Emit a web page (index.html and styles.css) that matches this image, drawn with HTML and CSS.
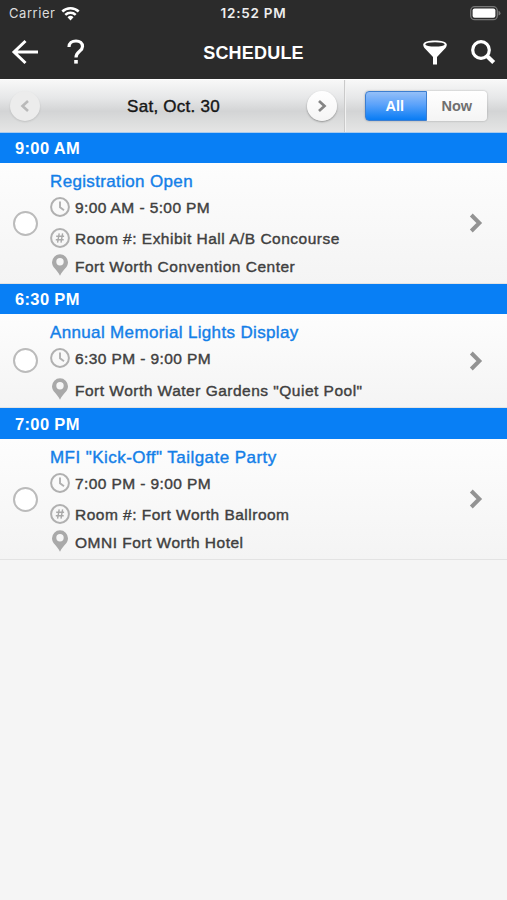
FILE: index.html
```html
<!DOCTYPE html>
<html lang="en">
<head>
<meta charset="utf-8">
<title>Schedule</title>
<link rel="stylesheet" href="styles.css">
</head>
<body>
<svg class="defs" aria-hidden="true">
  <symbol id="clock" viewBox="0 0 20 20"><circle cx="10" cy="10" r="8.9" fill="none" stroke="#b0b0b0" stroke-width="2"/><path d="M10 4.5V10.2L14 13.2" fill="none" stroke="#b0b0b0" stroke-width="1.900"/></symbol>
  <symbol id="hash" viewBox="0 0 20 20"><circle cx="10" cy="10" r="8.9" fill="none" stroke="#b0b0b0" stroke-width="2"/><path d="M9.2 5.3L7.6 14.7M12.6 5.3L11 14.7M6.2 8.3H14.1M5.8 11.8H13.7" fill="none" stroke="#a9a9a9" stroke-width="1.4"/></symbol>
  <symbol id="pin" viewBox="0 0 18 22"><path d="M9 .3A8 8 0 0 0 1 8.300C1 13.500 6 15.500 9 21.800C12 15.500 17 13.500 17 8.300A8 8 0 0 0 9 .3ZM9 4A3.700 3.700 0 1 1 9 11.400A3.700 3.700 0 0 1 9 4Z" fill="#a9a9a9" fill-rule="evenodd"/></symbol>
  <symbol id="chevron" viewBox="0 0 14 20"><path d="M2.300 2L10.300 10L2.300 18" fill="none" stroke="#939393" stroke-width="4"/></symbol>
</svg>
<header class="top">
  <div class="status">
    <div class="carrier"><span>Carrier</span>
      <svg width="19" height="15" viewBox="0 0 19 15"><g fill="none" stroke="#fff" stroke-width="2.500"><path d="M1.300 5.500A11.700 11.700 0 0 1 17.700 5.500"/><path d="M4.300 8.800A7.400 7.400 0 0 1 14.700 8.800"/></g><path d="M9.500 14.500L6.500 11.300A4.300 4.300 0 0 1 12.500 11.300Z" fill="#fff"/></svg>
    </div>
    <span class="clock">12:52 PM</span>
    <svg class="battery" width="31" height="15" viewBox="0 0 31 15"><rect x=".7" y=".7" width="26.600" height="13" rx="4" fill="none" stroke="#777" stroke-width="1.300"/><rect x="2.600" y="2.600" width="22.800" height="9.200" rx="2" fill="#fff"/><path d="M28.500 4.800Q30.500 5.500 30.500 7.200T28.500 9.600Z" fill="#777"/></svg>
  </div>
  <nav class="nav">
    <div class="side">
      <svg width="28" height="26" viewBox="0 0 28 26"><path d="M27 13H3M14.500 2L3 13L14.500 24" fill="none" stroke="#fff" stroke-width="3"/></svg>
      <svg class="help" width="18" height="26" viewBox="0 0 18 26"><path d="M2 8C2 4 5 2 9 2S15.500 4.200 15.500 7.500C15.500 12.500 9 12 9 18.500" fill="none" stroke="#fff" stroke-width="3.200"/><rect x="7.200" y="21" width="3.600" height="3.600" fill="#fff"/></svg>
    </div>
    <h1>SCHEDULE</h1>
    <div class="side right">
      <svg width="24" height="25" viewBox="0 0 24 25"><path d="M.2 4.500C.2-1 23.800-1 23.800 4.500C23.800 6.500 22.800 7.600 21.800 8.800L14 17V24.500H10V17L2.200 8.800C1.200 7.600.2 6.500.2 4.500Z" fill="#fff"/><ellipse cx="12" cy="4.400" rx="9.700" ry="2.200" fill="#2b2b2b"/></svg>
      <svg width="25" height="25" viewBox="0 0 25 25"><circle cx="10" cy="10" r="8.300" fill="none" stroke="#fff" stroke-width="3.200"/><path d="M15.700 15.700L22.700 22.500" stroke="#fff" stroke-width="4.200"/></svg>
    </div>
  </nav>
</header>
<div class="toolbar">
  <div class="dates">
    <button class="round off"><svg width="10" height="14" viewBox="0 0 10 14"><path d="M8 2L2.500 7L8 12" fill="none" stroke="#b9b9b9" stroke-width="2.600"/></svg></button>
    <span class="date">Sat, Oct. 30</span>
    <button class="round"><svg width="10" height="14" viewBox="0 0 10 14"><path d="M2 2L7.500 7L2 12" fill="none" stroke="#858585" stroke-width="2.700"/></svg></button>
  </div>
  <div class="filter">
    <div class="segments"><button class="seg on">All</button><button class="seg">Now</button></div>
  </div>
</div>
<main>
  <h2>9:00 AM</h2>
  <article class="item">
    <span class="check"></span>
    <div class="info">
      <h3>Registration Open</h3>
      <p class="time"><svg class="ic"><use href="#clock"/></svg><span class="hours">9:00 AM - 5:00 PM</span></p>
      <p class="room"><svg class="ic"><use href="#hash"/></svg><span>Room #: Exhibit Hall A/B Concourse</span></p>
      <p class="place"><svg class="pin"><use href="#pin"/></svg><span>Fort Worth Convention Center</span></p>
    </div>
    <svg class="go"><use href="#chevron"/></svg>
  </article>
  <h2>6:30 PM</h2>
  <article class="item compact">
    <span class="check"></span>
    <div class="info">
      <h3>Annual Memorial Lights Display</h3>
      <p class="time"><svg class="ic"><use href="#clock"/></svg><span class="hours">6:30 PM - 9:00 PM</span></p>
      <p class="place"><svg class="pin"><use href="#pin"/></svg><span>Fort Worth Water Gardens "Quiet Pool"</span></p>
    </div>
    <svg class="go"><use href="#chevron"/></svg>
  </article>
  <h2 class="tall">7:00 PM</h2>
  <article class="item">
    <span class="check"></span>
    <div class="info">
      <h3 class="wide">MFI "Kick-Off" Tailgate Party</h3>
      <p class="time"><svg class="ic"><use href="#clock"/></svg><span class="hours">7:00 PM - 9:00 PM</span></p>
      <p class="room"><svg class="ic"><use href="#hash"/></svg><span>Room #: Fort Worth Ballroom</span></p>
      <p class="place"><svg class="pin"><use href="#pin"/></svg><span>OMNI Fort Worth Hotel</span></p>
    </div>
    <svg class="go"><use href="#chevron"/></svg>
  </article>
</main>
</body>
</html>
```
FILE: styles.css
```css
* { box-sizing: border-box; }
body { margin: 0; min-height: 900px; background: #f5f5f5; font-family: "Liberation Sans", Arial, sans-serif; color: #404040; }
svg { display: block; flex: none; }
.defs { display: none; }
h1, h2, h3, p { margin: 0; }
button { border: 0; padding: 0; font-family: inherit; }

.top { height: 79px; background: #2b2b2b; color: #fff; }
.status { height: 27px; padding: 0 6px 0 9px; display: grid; grid-template-columns: 1fr auto 1fr; align-items: center; font: 500 13px/27px Inter, sans-serif; }
.carrier { display: flex; align-items: center; gap: 6px; color: #ddd; font-weight: 400; letter-spacing: .55px; }
.clock { margin-right: 3px; font-size: 13.5px; font-weight: 600; color: #eee; letter-spacing: .75px; }
.battery { justify-self: end; }
.nav { height: 50px; padding: 0 11px; display: grid; grid-template-columns: 1fr auto 1fr; align-items: center; }
.side { display: flex; align-items: center; }
.help { margin-left: 28px; }
.right { justify-content: flex-end; gap: 24px; }
h1 { font-size: 18px; line-height: 24px; padding-top: 2px; letter-spacing: .2px; }

.toolbar { height: 54px; display: flex; background: linear-gradient(#f8f8f8, #e6e7e8 35%, #d3d4d5 60%, #dcdddd 80%, #e5e5e5); border-top: 1px solid #fff; border-bottom: 1px solid #aacbed; }
.dates { width: 345px; padding: 0 7px 0 10px; display: flex; align-items: center; justify-content: space-between; border-right: 1px solid #cacaca; }
.round { width: 30px; height: 30px; border-radius: 50%; display: flex; align-items: center; justify-content: center; background: linear-gradient(#fff, #f5f5f5); box-shadow: 0 1px 2px rgba(0,0,0,.35); }
.off { background: #ececec; box-shadow: 0 1px 2px rgba(0,0,0,.12); }
.date { padding-top: 2px; color: #161616; font-size: 17px; letter-spacing: .25px; -webkit-text-stroke: .4px; }
.filter { flex: 1; padding-right: 20px; display: flex; align-items: center; justify-content: flex-end; border-left: 1px solid #f2f2f2; }
.segments { display: flex; width: 122px; height: 30px; border-radius: 4px; box-shadow: 0 0 2px rgba(0,0,0,.3); }
.seg { width: 61px; font-size: 14.5px; font-weight: 700; color: #707070; background: linear-gradient(#fff, #f4f4f4); border-radius: 0 4px 4px 0; }
.on { width: 62px; padding-right: 2px; color: #fff; border: 1px solid #3c7ed0; background: linear-gradient(#94bff8, #5ba2fa 45%, #087cf4); border-radius: 4px 0 0 4px; }

h2 { height: 30px; padding-left: 15px; background: #087ff5; color: #fff; font-size: 16.5px; line-height: 31px; letter-spacing: .35px; }
.tall { height: 31px; line-height: 32px; }
.item { height: 121px; padding: 7px 24px 0 13px; display: flex; background: linear-gradient(#fdfdfd, #f4f4f4); border-bottom: 1px solid #e3e3e3; }
.compact { height: 94px; }
.check { width: 25px; height: 25px; flex: none; align-self: center; margin: 0 12px 7px 0; border: 2px solid #bbb; border-radius: 50%; background: #fff; }
.info { flex: 1; }
h3 { height: 22px; color: #147fe8; font-size: 17px; line-height: 23px; font-weight: 400; letter-spacing: .35px; -webkit-text-stroke: .4px; white-space: nowrap; }
.wide { letter-spacing: .45px; }
p { display: flex; align-items: center; gap: 5px; font-size: 15.5px; line-height: 20px; letter-spacing: .49px; -webkit-text-stroke: .4px; white-space: nowrap; }
p span { padding-top: 2px; }
.hours { letter-spacing: .4px; }
.time { height: 30px; }
.room { height: 31px; }
.place { height: 26px; }
.compact .place { height: 34px; }
.ic { width: 20px; height: 20px; }
.pin { width: 18px; height: 22px; margin: -2px 1px 0; }
.go { width: 14px; height: 20px; align-self: center; margin-bottom: 7px; }
```
